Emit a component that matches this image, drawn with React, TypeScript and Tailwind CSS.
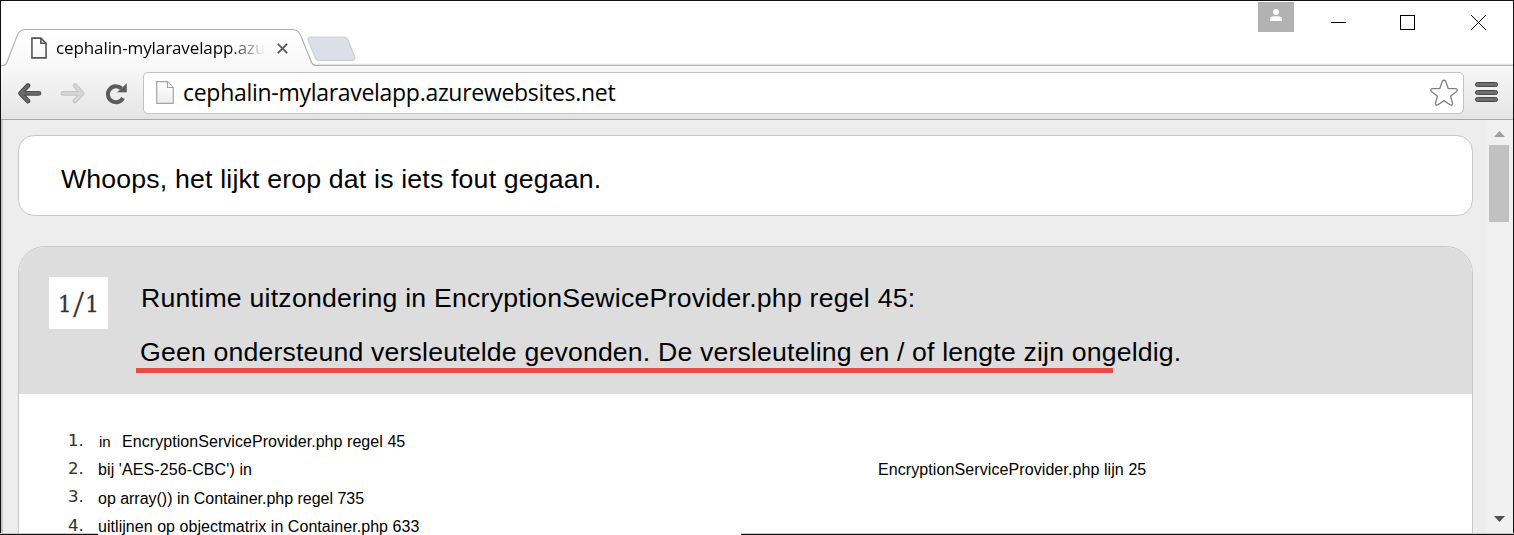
import React from "react";

function PageIcon({ className, stroke }: { className: string; stroke: string }) {
  return (
    <svg className={className} viewBox="0 0 17 23" fill="none" stroke={stroke} strokeWidth="1.7">
      <path d="M1 1H10.5L16 6.5V22H1Z" />
      <path d="M10.5 1V6.5H16" />
    </svg>
  );
}

function TabStrip() {
  return (
    <div className="relative h-[65px] shrink-0 bg-white">
      <svg className="absolute left-0 top-0 h-[65px] w-[1512px]" viewBox="1 1 1512 65" fill="none">
        <defs>
          <linearGradient id="tabFill" x1="0" y1="29" x2="0" y2="66" gradientUnits="userSpaceOnUse">
            <stop offset="0" stopColor="#ffffff" />
            <stop offset="1" stopColor="#f8f8f8" />
          </linearGradient>
        </defs>
        <path d="M313 64.3H1513" stroke="#dedede" />
        <path
          d="M1 65.5H3C5 65.5 6 64.5 7 62L17 36Q19.5 29.5 25 29.5H292Q298 29.5 300.5 35L311 61Q312.500 65.500 316 65.500H1513V67H1Z"
          fill="url(#tabFill)"
        />
        <path
          d="M1 65.500H3C5 65.500 6 64.500 7 62L17 36Q19.500 29.500 25 29.500H292Q298 29.500 300.500 35L311 61Q312.500 65.500 316 65.500H1513"
          stroke="#b2b2b2"
          strokeWidth="1.2"
        />
        <path
          d="M311 37H343Q346.500 37 348 40L354.500 56Q356 60.500 352 60.500H320Q316.500 60.500 315 57L308.500 41Q307 37 311 37Z"
          fill="#dbe0e8"
          stroke="#cdcdcd"
          strokeWidth="1.2"
        />
      </svg>
      <div className="relative flex h-full items-start">
        <PageIcon className="ml-[30px] mt-[36px] h-[22px] w-[16px]" stroke="#555555" />
        <span className="ml-[9px] mt-[35px] w-[209px] whitespace-nowrap bg-linear-to-r from-black from-82% to-transparent bg-clip-text font-['Open_Sans',sans-serif] text-[17px] leading-[24px] tracking-[-0.1px] text-transparent">
          cephalin-mylaravelapp.azu
        </span>
        <svg className="ml-[12px] mt-[42px] size-[11px]" viewBox="0 0 11 11" stroke="#555555" strokeWidth="1.7">
          <path d="M.8.8 10.200 10.200M10.200.8.8 10.200" />
        </svg>
        <div className="ml-auto mr-[45px] mt-px flex">
          <div className="flex h-[30px] w-[36px] justify-center bg-[#b2b2b2]">
            <svg className="mt-[7px] h-[12px] w-[12px]" viewBox="0 0 12 12" fill="white">
              <circle cx="6" cy="3" r="3" />
              <path d="M0 12V10Q0 7.300 4 7.300H8Q12 7.300 12 10V12Z" />
            </svg>
          </div>
        </div>
        <div className="mr-[27px] mt-[13px] flex items-center">
          <span className="-ml-[8px] mt-px h-px w-[15px] bg-black" />
          <span className="ml-[54px] mt-px size-[15px] border border-black" />
          <svg className="ml-[56px] mt-px size-[15px]" viewBox="0 0 15 15" stroke="black" strokeWidth="1">
            <path d="M0 0 15 15M15 0 0 15" />
          </svg>
        </div>
      </div>
    </div>
  );
}

function Toolbar() {
  return (
    <div className="flex h-[54px] shrink-0 items-start border-b border-[#a8a8a8] bg-linear-to-b from-[#f8f8f8] to-[#e4e4e4]">
      <svg className="ml-[15px] mt-[15px] h-[24px] w-[112px] shrink-0" viewBox="16 81 112 24" fill="none" strokeLinecap="round" strokeLinejoin="round">
        <path d="M28 85.500 20.500 93.300 28 101M21 93.300H39" stroke="#515151" strokeWidth="4.800" />
        <path d="M28 85.500 20.500 93.300 28 101M21 93.300H39" stroke="#6b6b6b" strokeWidth="2.400" />
        <path d="M75 85.500 82 93.300 75 101M81 93.300H63" stroke="#c3c3c3" strokeWidth="4.800" />
        <path d="M75 85.500 82 93.300 75 101M81 93.300H63" stroke="#d6d6d6" strokeWidth="2.800" />
        <path d="M121.500 88.500A8 8 0 1 0 123 98" stroke="#5c5c5c" strokeWidth="4" strokeLinecap="butt" />
        <path d="M126.500 84V92H118Z" fill="#5c5c5c" stroke="#5c5c5c" strokeWidth=".6" />
      </svg>
      <div className="ml-[15px] mt-[6px] flex h-[42px] w-[1321px] shrink-0 rounded-[5px] border border-[#c2c2c2] bg-white">
        <svg className="ml-[12px] mt-[8px] h-[23px] w-[18px]" viewBox="0 0 18 23" fill="none">
          <defs>
            <linearGradient id="sheet" x1="0" y1="0" x2="0" y2="1">
              <stop offset="0" stopColor="#ffffff" />
              <stop offset="1" stopColor="#ededed" />
            </linearGradient>
          </defs>
          <path d="M.7.700H11.500L17.300 6.500V22.300H.7Z" fill="url(#sheet)" stroke="#a5a5a5" strokeWidth="1.200" />
          <path d="M11.500.700V6.500H17.300" fill="white" stroke="#a5a5a5" strokeWidth="1.200" />
        </svg>
        <span className="ml-[9px] mt-[3px] whitespace-nowrap font-['Open_Sans',sans-serif] text-[23px] leading-[32px] tracking-[-0.29px] text-black">
          cephalin-mylaravelapp.azurewebsites.net
        </span>
        <svg className="ml-auto mr-[5px] mt-[6px] h-[27px] w-[28px]" viewBox="0 0 28 27" fill="white" stroke="#808080" strokeWidth="1.300" strokeLinejoin="round">
          <path d="M12.400 2Q14 .4 15.600 2L18.200 9.500 25.800 9.700Q28.200 10.500 26.500 12.500L20.500 17.300 22.600 24.300Q22.500 26.700 20 25.700L14 21.600 8 25.700Q5.500 26.700 5.400 24.300L7.500 17.300 1.500 12.500Q-.2 10.500 2.200 9.700L9.800 9.500Z" />
        </svg>
      </div>
      <div className="ml-[11px] mt-[16px] flex flex-col">
        <span className="h-[5px] w-[23px] rounded-[3px] border border-[#484848] bg-[#6e6e6e]" />
        <span className="mt-[3px] h-[5px] w-[23px] rounded-[3px] border border-[#484848] bg-[#6e6e6e]" />
        <span className="mt-[2px] h-[5px] w-[23px] rounded-[3px] border border-[#484848] bg-[#6e6e6e]" />
      </div>
    </div>
  );
}

const frames = [
  { no: "1.", text: "in", textClass: "w-[24px] pl-px text-[15px]", file: "EncryptionServiceProvider.php regel 45", fileClass: "tracking-[0.06px]" },
  { no: "2.", text: "bij 'AES-256-CBC') in", textClass: "w-[780px] tracking-[0.1px]", file: "EncryptionServiceProvider.php lijn 25", fileClass: "tracking-[0.09px]" },
  { no: "3.", text: "op array()) in Container.php regel 735", textClass: "tracking-[-0.02px]", file: "", fileClass: "" },
  { no: "4.", text: "uitlijnen op objectmatrix in Container.php 633", textClass: "tracking-[0.045px]", file: "", fileClass: "" },
];

function Scrollbar() {
  return (
    <div className="flex w-[27px] shrink-0 flex-col items-center bg-[#f0f0f0] pr-[1px]">
      <svg className="mt-[11px] h-[6px] w-[11px] shrink-0" viewBox="0 0 11 6" fill="#a0a0a0">
        <path d="M0 6 5.500 0 11 6Z" />
      </svg>
      <div className="mt-[8px] h-[77px] w-[20px] shrink-0 bg-[#c1c1c1]" />
      <svg className="mb-[13px] mt-auto h-[6px] w-[11px] shrink-0" viewBox="0 0 11 6" fill="#505050">
        <path d="M0 0H11L5.500 6Z" />
      </svg>
    </div>
  );
}

export default function App() {
  return (
    <div className="relative h-[535px] w-[1514px] font-['Liberation_Sans',Arial,sans-serif] text-black">
      <div className="flex h-full flex-col border border-b-0 border-[#111] bg-white">
        <TabStrip />
        <Toolbar />
        <div className="flex min-h-0 flex-1 border-l-2 border-[#c8c8c8] bg-[#ededed]">
          <main className="ml-[15px] mr-[13px] flex w-[1455px] shrink-0 flex-col">
            <section className="mt-[15px] h-[81px] shrink-0 rounded-[16px] border border-[#c8c8c8] bg-white pl-[42px] pt-[27px]">
              <h1 className="whitespace-nowrap text-[26.670px] leading-[32px] tracking-[0.18px]">
                Whoops, het lijkt erop dat is iets fout gegaan.
              </h1>
            </section>
            <section className="mt-[30px] flex min-h-0 flex-1 flex-col rounded-t-[27px] border border-b-0 border-[#c8c8c8] bg-white">
              <header className="flex h-[147px] shrink-0 rounded-t-[26px] bg-[#dddddd]">
                <div className="ml-[30px] mt-[30px] h-[52px] w-[59px] whitespace-nowrap bg-white text-center font-['DejaVu_Serif',serif] text-[21.500px] leading-[55px] text-[#333] [-webkit-text-stroke:0.3px_#333]">
                  <span>1</span>
                  <span className="mx-[1.500px] align-[-5px] font-['Liberation_Serif',serif] text-[38px] leading-[20px]">/</span>
                  <span>1</span>
                </div>
                <div className="ml-[33px] whitespace-nowrap text-[26.670px] leading-[32px]">
                  <h2 className="mt-[35px] tracking-[0.230px]">
                    Runtime uitzondering in EncryptionSewiceProvider.php regel 45:
                  </h2>
                  <p className="-ml-px mt-[22px] tracking-[0.168px]">
                    Geen ondersteund versleutelde gevonden. De versleuteling en / of lengte zijn ongeldig.
                  </p>
                  <div className="-ml-[5px] h-[5px] w-[977px] bg-[#ea4c46]" />
                </div>
              </header>
              <ol className="mt-[34px] flex flex-col">
                {frames.map((f) => (
                  <li key={f.no} className="flex h-[28.330px] shrink-0 items-center whitespace-nowrap pl-[49px] text-[16px] leading-[18px]">
                    <span className="-mt-[3px] w-[30px] shrink-0 font-['DejaVu_Sans',sans-serif] text-[16.500px] text-[#333] [-webkit-text-stroke:0.1px_#333]">
                      {f.no}
                    </span>
                    <span className={f.textClass}>{f.text}</span>
                    <span className={f.fileClass}>{f.file}</span>
                  </li>
                ))}
              </ol>
            </section>
          </main>
          <Scrollbar />
        </div>
      </div>
      <div className="absolute bottom-0 left-0 h-[2px] w-[98px] border-b border-[#111] bg-[#c8c8c8]" />
      <div className="absolute bottom-0 right-0 h-[2px] w-[773px] border-b border-[#111] bg-[#c8c8c8]" />
    </div>
  );
}
